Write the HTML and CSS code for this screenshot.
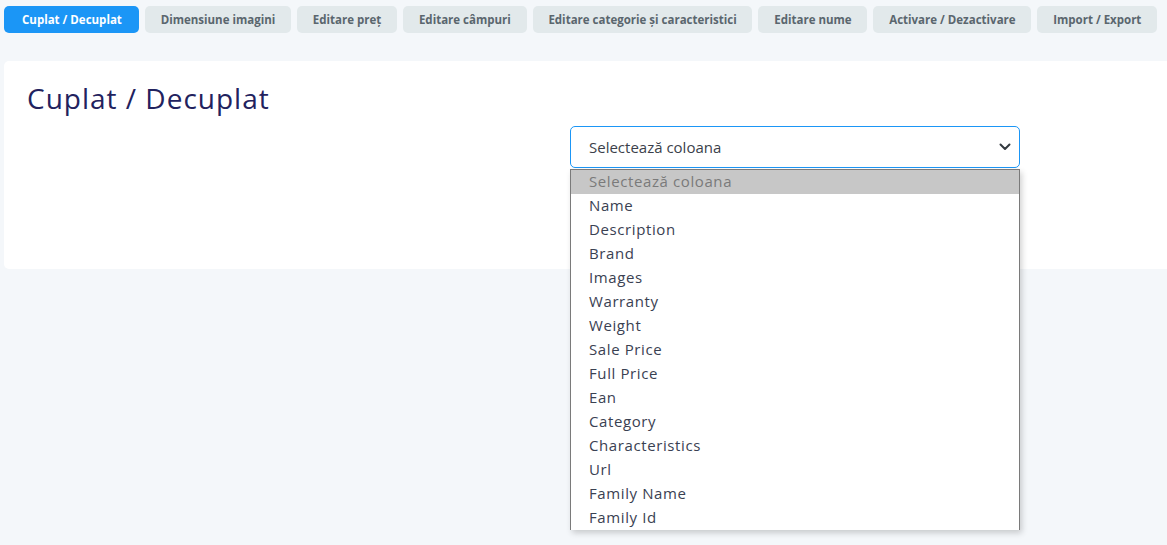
FILE: index.html
```
<!DOCTYPE html>
<html lang="ro">
<head>
<meta charset="utf-8">
<title>Cuplat / Decuplat</title>
<link rel="stylesheet" href="styles.css">
</head>
<body>
<!-- tab-uri -->
<ul class="tabs">
  <li class="on">Cuplat / Decuplat</li>
  <li>Dimensiune imagini</li>
  <li>Editare preț</li>
  <li>Editare câmpuri</li>
  <li>Editare categorie și caracteristici</li>
  <li>Editare nume</li>
  <li>Activare / Dezactivare</li>
  <li>Import / Export</li>
</ul>

<div class="card">
  <h1 class="card_title">Cuplat / Decuplat</h1>
  <div class="row">
    <div class="select_wrap">
      <div class="select_box">
        <span>Selectează coloana</span>
        <svg class="chevron" width="12" height="8" viewBox="0 0 12 8"><path d="M1.5 1.5 6 6 10.5 1.5" fill="none" stroke="#343a40" stroke-width="2" stroke-linecap="round" stroke-linejoin="round"/></svg>
      </div>
      <!-- lista deschisa -->
      <ul class="options">
        <li class="placeholder">Selectează coloana</li>
        <li>Name</li>
        <li>Description</li>
        <li>Brand</li>
        <li>Images</li>
        <li>Warranty</li>
        <li>Weight</li>
        <li>Sale Price</li>
        <li>Full Price</li>
        <li>Ean</li>
        <li>Category</li>
        <li>Characteristics</li>
        <li>Url</li>
        <li>Family Name</li>
        <li>Family Id</li>
      </ul>
    </div>
  </div>
</div>
</body>
</html>
```

FILE: styles.css
```
body, ul, li, h1, div {margin:0; padding:0;}
li {list-style:none;}
html {background:#f4f7fa; min-height:100%;}
body {font-family:"Open Sans", "Noto Sans", sans-serif; padding:6px 0 0 4px; min-height:545px; box-sizing:border-box;}

.tabs {display:flex; gap:6px;}
.tabs li {height:27px; line-height:27px; padding:0 15.8px; border-radius:5px; background:#e2e9eb; color:#5a666e; font-size:11.5px; font-weight:700; white-space:nowrap;}
.tabs li.on {background:#1b96f6; color:#fff; padding:0 17px 0 18px;}

.card {background:#fff; margin-top:28px; border-radius:5px 0 0 5px; height:208px; box-sizing:border-box; padding:20px 0 0 23px;}
.card_title {font-size:28px; font-weight:500; color:#22225e; line-height:34px; letter-spacing:1px;}

.row {padding:11px 0 0 543px;}
.select_wrap {position:relative; width:450px;}
.select_box {height:42px; box-sizing:border-box; border:1px solid #1b96f6; border-radius:5px; display:flex; align-items:center; justify-content:space-between; padding:0 8px 0 18px; font-size:15px; color:#3b3f4a;}

.options {position:absolute; z-index:10; left:0; top:43px; width:450px; box-sizing:border-box; background:#fff; border:1px solid #7a7a7a; border-bottom:0; box-shadow:2px 3px 6px rgba(0,0,0,0.18);}
.options li {height:24px; line-height:23px; padding-left:18px; font-size:15px; color:#3a4152; letter-spacing:0.6px;}
.options li.placeholder {background:#c7c7c7; color:#7a7a7a;}
```
